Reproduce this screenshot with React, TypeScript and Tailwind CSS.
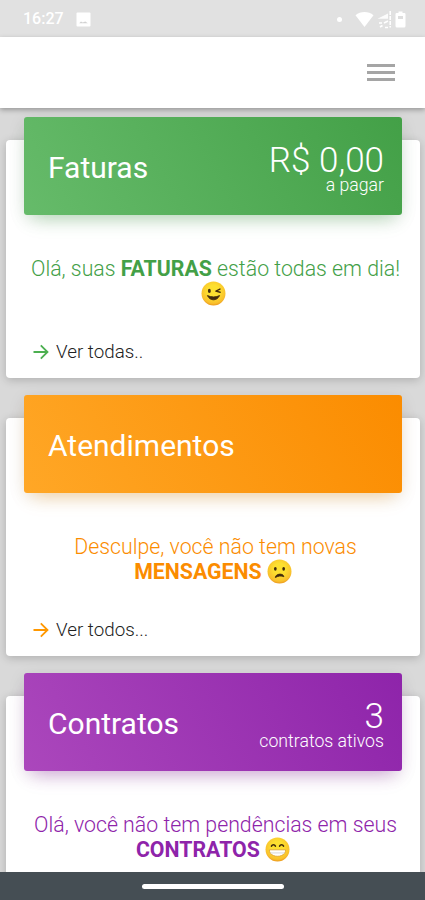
import type { ReactNode } from 'react';

interface SummaryCardProps {
  title: string;
  headerClass: string;
  value?: string;
  caption?: string;
  children: ReactNode;
  link?: string;
  arrowClass?: string;
}

function StatusBar() {
  return (
    <div className="flex h-[37px] shrink-0 items-center justify-between bg-[#e1e1e1] pl-[23px] pr-[19px] pt-px text-white">
      <div className="flex items-center gap-[13px]">
        <span className="w-[40px] whitespace-nowrap text-[16px] font-medium leading-5">16:27</span>
        <svg className="h-[15px] w-[15px]" viewBox="0 0 15 15" fill="none">
          <rect x="0.5" y="0.5" width="14" height="14" rx="1" fill="#fff" />
          <path d="M3.2 11.3 L5 9.6 L6.7 10.6 L9.3 9.4 L11.8 11.3 Z" fill="#d2d2d2" />
        </svg>
      </div>
      <div className="flex items-center">
        <span className="mr-[13px] h-[5px] w-[5px] rounded-full bg-white" />
        <svg className="mr-[3px] h-[17px] w-[19px]" viewBox="0 0 19 17">
          <path d="M0.5 4.2 C5.5 -0.2 13.5 -0.2 18.5 4.2 L9.5 16 Z" fill="#fff" />
        </svg>
        <svg className="mr-[3px] h-[19px] w-[15px]" viewBox="0 0 15 19" fill="none">
          <path d="M0.5 8.8 L11 3.5 V8.8 Z" fill="#fff" opacity="0.9" />
          <path d="M13.2 1 V17.5" stroke="#fff" strokeWidth="1.5" strokeDasharray="4 1" />
          <path d="M2 13 H5 M7 13 L11 11 M3 17 L5.5 15.5 M8 17.5 H11" stroke="#fff" strokeWidth="1.7" />
        </svg>
        <svg className="h-[17px] w-[11px]" viewBox="0 0 11 17">
          <path d="M3.5 0.5 H7.5 V2 H9.3 Q10.5 2 10.5 3.2 V15 Q10.5 16.5 9 16.5 H2 Q0.5 16.5 0.5 15 V3.2 Q0.5 2 1.7 2 H3.5 Z" fill="#fff" />
          <path d="M3 5 H8 V8 H3 Z" fill="#dedede" />
        </svg>
      </div>
    </div>
  );
}

function ArrowRight({ className }: { className?: string }) {
  return (
    <svg className={className} viewBox="0 0 16 16" fill="none" stroke="currentColor" strokeWidth="1.8">
      <path d="M0.5 8 H14.3 M7.8 1.3 L14.5 8 L7.8 14.7" />
    </svg>
  );
}

function Face({ id, children }: { id: string; children: ReactNode }) {
  return (
    <svg className="inline-block h-[25px] w-[25px] align-[-5px]" viewBox="0 0 24 24" fill="none">
      <defs>
        <radialGradient id={id} cx="0.5" cy="0.4" r="0.6">
          <stop offset="0.4" stopColor="#fde030" />
          <stop offset="0.85" stopColor="#f9c02c" />
          <stop offset="1" stopColor="#ec9a1e" />
        </radialGradient>
      </defs>
      <circle cx="12" cy="12" r="11.5" fill={`url(#${id})`} />
      {children}
    </svg>
  );
}

function WinkFace() {
  return (
    <Face id="wink">
      <ellipse cx="8" cy="9.5" rx="1.4" ry="2" fill="#422b0d" />
      <path d="M18.2 7.8 L14.3 9.7 L18.3 10.8" stroke="#422b0d" strokeWidth="1.4" strokeLinecap="round" strokeLinejoin="round" />
      <path d="M6.2 14 C8.5 19.4 15.5 19.4 17.8 14 C14.5 15.8 9.8 15.8 6.2 14 Z" fill="#422b0d" stroke="#422b0d" strokeWidth="0.9" strokeLinejoin="round" />
    </Face>
  );
}

function FrownFace() {
  return (
    <Face id="frown">
      <ellipse cx="8" cy="9.4" rx="1.3" ry="1.8" fill="#422b0d" />
      <ellipse cx="16" cy="9.4" rx="1.3" ry="1.8" fill="#422b0d" />
      <path d="M8 17.8 C8 14.2 15.5 13 16.2 17 C14 15.8 10.5 16.3 8 17.8 Z" fill="#422b0d" stroke="#422b0d" strokeWidth="0.8" strokeLinejoin="round" />
    </Face>
  );
}

function BeamFace() {
  return (
    <Face id="beam">
      <path d="M6.2 8.8 C7 7 9.2 7 10 8.8 M14 8.8 C14.8 7 17 7 17.8 8.8" stroke="#422b0d" strokeWidth="1.5" strokeLinecap="round" />
      <path d="M4.2 12.3 H19.8 C20 20.6 4 20.6 4.2 12.3 Z" fill="#fff" stroke="#e0a030" strokeWidth="0.8" strokeLinejoin="round" />
      <path d="M5 15.3 H19" stroke="#c8c8c8" strokeWidth="0.7" />
    </Face>
  );
}

function SummaryCard({ title, headerClass, value, caption, children, link, arrowClass }: SummaryCardProps) {
  return (
    <section className="flex h-[238px] shrink-0 flex-col rounded-[4px] bg-white px-[18px] shadow-[0_2px_10px_rgba(0,0,0,0.2)]">
      <header className={`-mt-[23px] flex h-[98px] shrink-0 items-center justify-between rounded-[3px] pl-[24px] pr-[18px] text-white ${headerClass}`}>
        <h2 className="pt-[3px] text-[30px] leading-9">{title}</h2>
        {value && (
          <div className="flex flex-col items-end pt-[7px] font-light">
            <span className="text-[35px] leading-[31px]">{value}</span>
            <span className="text-[17.7px] leading-[18px]">{caption}</span>
          </div>
        )}
      </header>
      <p className="mt-[41px] whitespace-nowrap text-center text-[21.3px] font-light leading-[25px]">{children}</p>
      {link && (
        <a className="mt-auto flex items-center gap-[7px] pb-[14px] pl-[9px] text-[18.8px] font-light leading-6 text-[#222]">
          <ArrowRight className={`h-4 w-4 ${arrowClass}`} />
          {link}
        </a>
      )}
    </section>
  );
}

export default function App() {
  return (
    <div className="flex h-[900px] w-[425px] flex-col overflow-hidden bg-[#d9d9d9] font-['Roboto',sans-serif]">
      <StatusBar />
      <nav className="relative z-10 flex h-[71px] shrink-0 items-center justify-end bg-white pr-[30px] shadow-[0_2px_5px_rgba(0,0,0,0.3)]">
        <div className="flex w-7 flex-col gap-1">
          <span className="h-[3px] bg-[#a5a5a5]" />
          <span className="h-[3px] bg-[#a5a5a5]" />
          <span className="h-[3px] bg-[#a5a5a5]" />
        </div>
      </nav>

      <main className="flex min-h-0 flex-1 flex-col gap-10 overflow-hidden pl-[6px] pr-[5px] pt-8">
        <SummaryCard
          title="Faturas"
          headerClass="bg-[linear-gradient(60deg,#66bb6a,#43a047)] shadow-[0_10px_18px_-8px_rgba(76,175,80,0.4),0_4px_18px_rgba(0,0,0,0.09)]"
          value="R$ 0,00"
          caption="a pagar"
          link="Ver todas.."
          arrowClass="text-[#4caf50]"
        >
          <span className="text-[#43a047]">
            <span className="pl-[5px]">
              Olá, suas <b className="font-bold">FATURAS</b> estão todas em dia!
            </span>
            <br />
            <WinkFace />
          </span>
        </SummaryCard>

        <SummaryCard
          title="Atendimentos"
          headerClass="bg-[linear-gradient(60deg,#ffa726,#fb8c00)] shadow-[0_10px_18px_-8px_rgba(255,152,0,0.35),0_4px_18px_rgba(0,0,0,0.09)]"
          link="Ver todos..."
          arrowClass="text-[#ff9800]"
        >
          <span className="text-[#fb8c00]">
            <span className="pl-[5px]">Desculpe, você não tem novas</span>
            <br />
            <b className="font-bold">MENSAGENS</b> <FrownFace />
          </span>
        </SummaryCard>

        <SummaryCard
          title="Contratos"
          headerClass="bg-[linear-gradient(60deg,#ab47bc,#8e24aa)] shadow-[0_10px_18px_-8px_rgba(156,39,176,0.4),0_4px_18px_rgba(0,0,0,0.09)]"
          value="3"
          caption="contratos ativos"
        >
          <span className="text-[#8e24aa]">
            <span className="pl-[5px]">Olá, você não tem pendências em seus</span>
            <br />
            <b className="font-bold">CONTRATOS</b> <BeamFace />
          </span>
        </SummaryCard>
      </main>

      <div className="relative z-10 flex h-7 shrink-0 items-center justify-center bg-[#454e54]">
        <span className="h-[5px] w-[142px] rounded-full bg-white" />
      </div>
    </div>
  );
}
